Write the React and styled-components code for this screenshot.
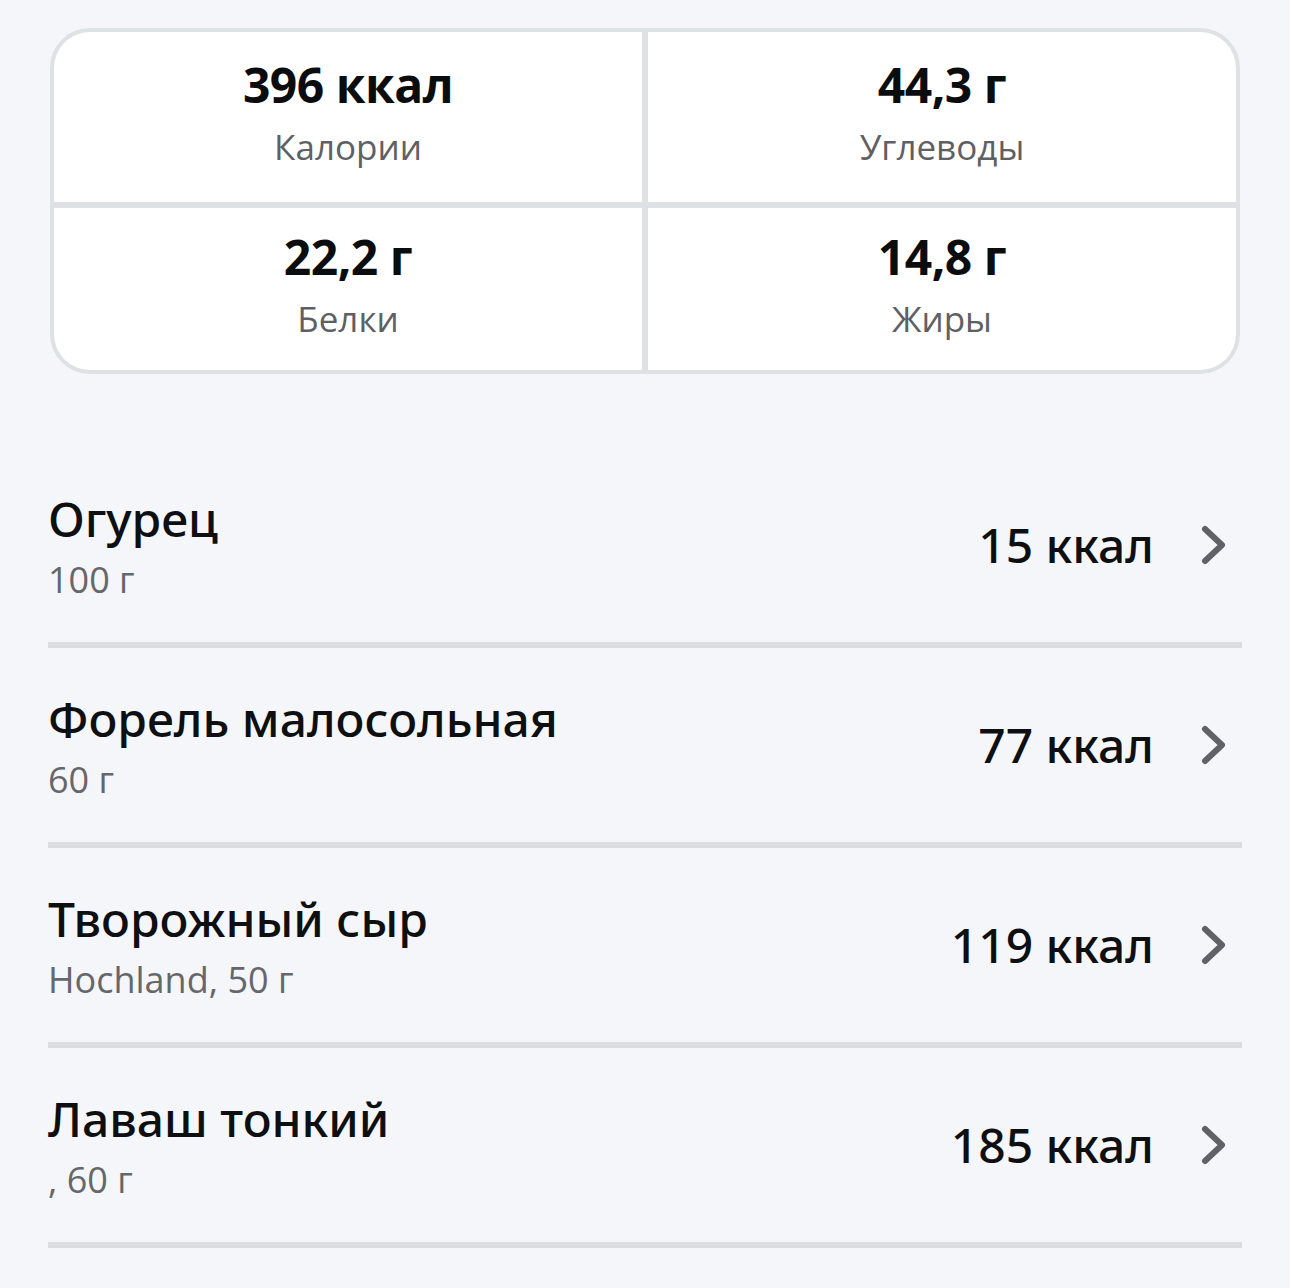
import React from "react";
import styled, { createGlobalStyle } from "styled-components";

const Global = createGlobalStyle`
  html, body { margin: 0; padding: 0; background: #f5f6f9; }
  body { font-family: "Open Sans", "Noto Sans", sans-serif; }
`;

const Page = styled.div`
  width: 1290px;
  min-height: 1288px;
  box-sizing: border-box;
  padding: 28px 48px 0 48px;
  background: #f5f6f9;
`;

const SummaryCard = styled.div`
  margin: 0 2px;
  border: 4px solid #dfe2e5;
  border-radius: 40px;
  overflow: hidden;
  background: #dfe2e5;
  display: grid;
  grid-template-columns: 1fr 1fr;
  gap: 6px;
`;

const Cell = styled.div`
  background: #ffffff;
  height: ${(p) => p.$h}px;
  display: flex;
  flex-direction: column;
  align-items: center;
  justify-content: center;
  gap: 12px;
  padding-bottom: 8px;
  box-sizing: border-box;
`;

const Value = styled.div`
  font-size: 48px;
  font-weight: 700;
  color: #0b0c0e;
  line-height: 56px;
  letter-spacing: -0.5px;
`;

const Label = styled.div`
  font-size: 35px;
  color: #5e6063;
  line-height: 44px;
`;

const List = styled.div`
  margin-top: 74px;
  display: flex;
  flex-direction: column;
`;

const Row = styled.div`
  height: 194px;
  display: flex;
  align-items: center;
  border-bottom: 6px solid #dcdde0;
`;

const Info = styled.div`
  flex: 1;
  display: flex;
  flex-direction: column;
  padding-top: 2px;
  gap: 10px;
`;

const Name = styled.div`
  font-family: "Noto Sans", "Open Sans", sans-serif;
  font-size: 48px;
  font-weight: 500;
  color: #0e0f11;
  line-height: 58px;
`;

const Sub = styled.div`
  font-size: 36px;
  color: #65676a;
  line-height: 44px;
`;

const Kcal = styled.div`
  font-family: "Noto Sans", "Open Sans", sans-serif;
  font-size: 48px;
  font-weight: 500;
  color: #0e0f11;
  margin-right: 42px;
  line-height: 58px;
`;

const Chevron = styled.svg`
  width: 34px;
  height: 48px;
  margin-right: 12px;
  flex-shrink: 0;
`;

const stats = [
  ["396 ккал", "Калории", 170],
  ["44,3 г", "Углеводы", 170],
  ["22,2 г", "Белки", 162],
  ["14,8 г", "Жиры", 162],
];

const items = [
  ["Огурец", "100 г", "15 ккал"],
  ["Форель малосольная", "60 г", "77 ккал"],
  ["Творожный сыр", "Hochland, 50 г", "119 ккал"],
  ["Лаваш тонкий", ", 60 г", "185 ккал"],
];

export default function App() {
  return (
    <Page>
      <Global />
      <SummaryCard>
        {stats.map(([v, l, h]) => (
          <Cell key={l} $h={h}>
            <Value>{v}</Value>
            <Label>{l}</Label>
          </Cell>
        ))}
      </SummaryCard>
      <List>
        {items.map(([n, s, k]) => (
          <Row key={n}>
            <Info>
              <Name>{n}</Name>
              <Sub>{s}</Sub>
            </Info>
            <Kcal>{k}</Kcal>
            <Chevron viewBox="0 0 34 48">
              <path d="M9 8 L26 24 L9 40" fill="none" stroke="#5f6266" strokeWidth="6" strokeLinecap="round" strokeLinejoin="round" />
            </Chevron>
          </Row>
        ))}
      </List>
    </Page>
  );
}
